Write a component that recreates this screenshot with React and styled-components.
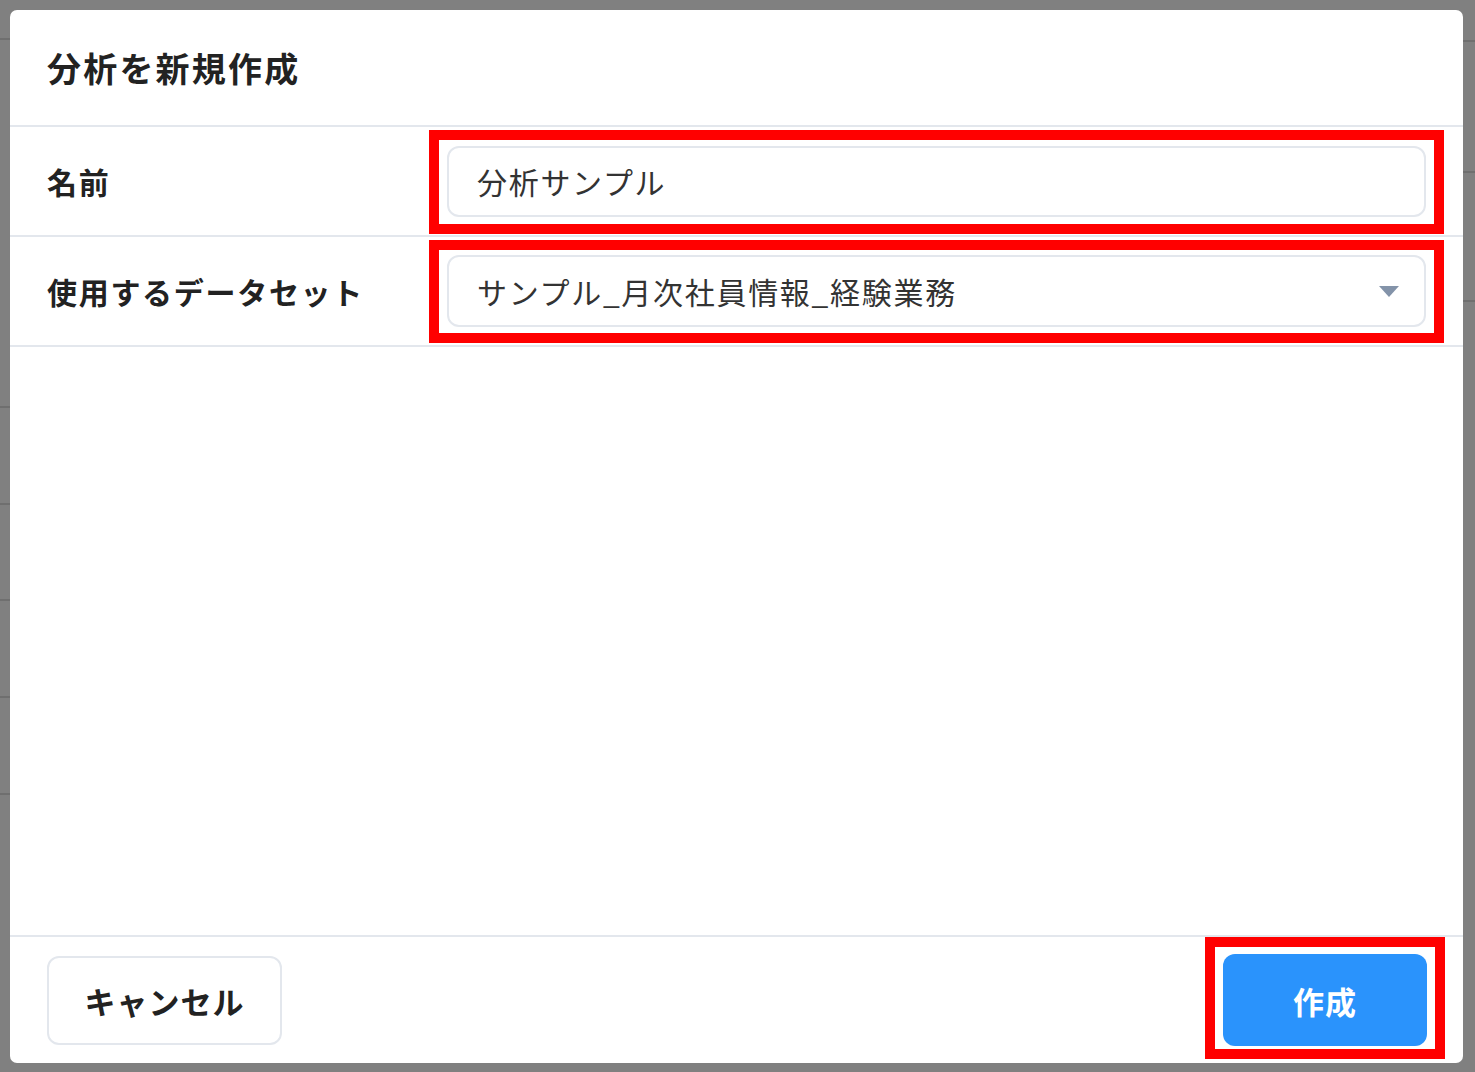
import React from 'react';
import styled, { createGlobalStyle } from 'styled-components';

const GlobalStyle = createGlobalStyle`
  html, body {
    margin: 0;
    padding: 0;
    height: 100%;
    background: #808080;
    font-family: "Noto Sans CJK JP", "Noto Sans", sans-serif;
    color: #222;
  }
  #root {
    height: 100%;
  }
`;

const leftRows = [40, 368, 97, 96, 97, 97];
const rightRows = [42, 131, 129];

export default function App() {
  return (
    <>
      <GlobalStyle />
      <PageBehind>
        <RowColumn>
          {leftRows.map((h, i) => (
            <BackRow key={i} style={{ height: `${h}px` }} />
          ))}
        </RowColumn>
        <RowColumn>
          {rightRows.map((h, i) => (
            <BackRow key={i} style={{ height: `${h}px` }} />
          ))}
        </RowColumn>
      </PageBehind>

      <Overlay>
        <Modal>
          <Header>
            <Title>分析を新規作成</Title>
          </Header>

          <FormRow>
            <Label>名前</Label>
            <Field>
              <Highlight $top={16} $bottom={17}>
                <Input defaultValue="分析サンプル" />
              </Highlight>
            </Field>
          </FormRow>

          <FormRow>
            <Label>使用するデータセット</Label>
            <Field>
              <Highlight $top={15} $bottom={16}>
                <Select>
                  <span>サンプル_月次社員情報_経験業務</span>
                  <Caret viewBox="0 0 20 11">
                    <path d="M0 0 H20 L10 11 Z" fill="#8393a9" />
                  </Caret>
                </Select>
              </Highlight>
            </Field>
          </FormRow>

          <Body />

          <Footer>
            <CancelButton>キャンセル</CancelButton>
            <Highlight $top={17} $bottom={13}>
              <CreateButton>作成</CreateButton>
            </Highlight>
          </Footer>
        </Modal>
      </Overlay>
    </>
  );
}

const PageBehind = styled.div`
  display: flex;
  justify-content: space-between;
  height: 100%;
`;

const RowColumn = styled.div`
  display: flex;
  flex-direction: column;
  width: 40px;
`;

const BackRow = styled.div`
  box-sizing: border-box;
  border-bottom: 2px solid #6f6f6f;
`;

const Overlay = styled.div`
  position: fixed;
  inset: 0;
  padding: 10px 12px 9px 10px;
  display: flex;
`;

const Modal = styled.div`
  flex: 1;
  display: flex;
  flex-direction: column;
  background: #ffffff;
  border-radius: 7px;
`;

const Header = styled.div`
  height: 115px;
  display: flex;
  align-items: center;
  padding: 0 37px;
  border-bottom: 2px solid #e3e7ed;
`;

const Title = styled.h1`
  margin: 0;
  font-size: 34px;
  font-weight: 700;
  letter-spacing: 2.2px;
  color: #222;
`;

const FormRow = styled.div`
  display: grid;
  grid-template-columns: 420px 1fr;
  align-items: center;
  height: 108px;
  border-bottom: 2px solid #e3e7ed;
`;

const Label = styled.div`
  padding-left: 37px;
  font-size: 30px;
  font-weight: 700;
  letter-spacing: 1.7px;
  color: #222;
`;

const Field = styled.div`
  padding: 0 37px 0 17px;
`;

const Highlight = styled.div`
  position: relative;
  &::after {
    content: '';
    position: absolute;
    top: -${p => p.$top}px;
    bottom: -${p => p.$bottom}px;
    left: -18px;
    right: -18px;
    border: 10px solid #ff0000;
    pointer-events: none;
  }
`;

const Input = styled.input`
  box-sizing: border-box;
  width: 100%;
  height: 71px;
  padding: 0 28px;
  border: 2px solid #e3e7ed;
  border-radius: 12px;
  font-family: inherit;
  font-size: 30px;
  letter-spacing: 1.7px;
  color: #333;
  outline: none;
`;

const Select = styled.div`
  box-sizing: border-box;
  display: flex;
  align-items: center;
  justify-content: space-between;
  height: 72px;
  padding: 0 25px 0 28px;
  border: 2px solid #e3e7ed;
  border-radius: 12px;
  font-size: 30px;
  letter-spacing: 1.7px;
  color: #333;
`;

const Caret = styled.svg`
  width: 20px;
  height: 11px;
`;

const Body = styled.div`
  flex: 1;
`;

const Footer = styled.div`
  display: flex;
  justify-content: space-between;
  align-items: center;
  height: 126px;
  padding: 0 36px 0 37px;
  border-top: 2px solid #e3e7ed;
`;

const BaseButton = styled.button`
  box-sizing: border-box;
  border-radius: 12px;
  font-family: inherit;
  font-size: 31px;
  font-weight: 700;
  letter-spacing: 1px;
  cursor: pointer;
`;

const CancelButton = styled(BaseButton)`
  width: 235px;
  height: 89px;
  background: #ffffff;
  border: 2px solid #e3e7ed;
  color: #222;
`;

const CreateButton = styled(BaseButton)`
  display: block;
  width: 204px;
  height: 92px;
  background: #2a93fc;
  border: none;
  color: #ffffff;
`;
